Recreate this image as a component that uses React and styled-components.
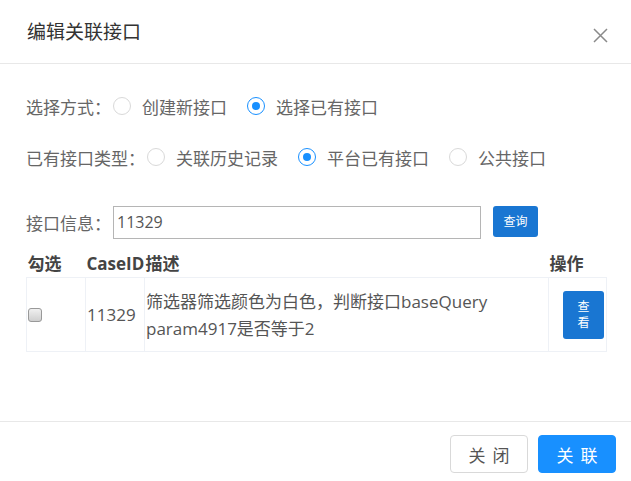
import React, { useState } from "react";
import styled, { createGlobalStyle } from "styled-components";

const GlobalStyle = createGlobalStyle`
  html, body {
    margin: 0;
    padding: 0;
    background: #fff;
  }
  body {
    font-family: "Open Sans", "Noto Sans CJK SC", sans-serif;
  }
  * {
    box-sizing: border-box;
  }
`;

const Dialog = styled.div`
  display: flex;
  flex-direction: column;
  width: 631px;
  height: 481px;
  background: #fff;
`;

const Header = styled.div`
  display: flex;
  align-items: center;
  justify-content: space-between;
  height: 64px;
  padding: 0 23px 0 27px;
  border-bottom: 1px solid #e8e8e8;
`;

const Title = styled.div`
  font-size: 19px;
  color: #333;
  padding-bottom: 2px;
`;

const CloseButton = styled.div`
  display: flex;
  width: 15px;
  height: 15px;
  margin-top: 8px;
  cursor: pointer;
`;

const Body = styled.div`
  flex: 1;
  padding: 25px 25px 0 26px;
`;

const FormRow = styled.div`
  display: flex;
  align-items: center;
  height: 34px;
  margin-top: ${({ $top }) => $top || 0}px;
  font-size: 17px;
  color: #666;
`;

const Label = styled.span`
  white-space: nowrap;
`;

const Option = styled.label`
  display: flex;
  align-items: center;
  margin-left: 20px;
  cursor: pointer;

  &:first-of-type {
    margin-left: 2px;
  }
`;

const Radio = styled.span`
  position: relative;
  width: 18px;
  height: 18px;
  border-radius: 50%;
  border: 1px solid ${({ $checked }) => ($checked ? "#1890ff" : "#d9d9d9")};
  background: #fff;
  margin-right: 11px;

  &::after {
    content: "";
    display: ${({ $checked }) => ($checked ? "block" : "none")};
    position: absolute;
    left: 4px;
    top: 4px;
    width: 8px;
    height: 8px;
    border-radius: 50%;
    background: #1890ff;
  }
`;

const SearchInput = styled.input`
  width: 368px;
  height: 33px;
  margin-left: 2px;
  padding: 0 3px;
  border: 1px solid #b5b5b5;
  font-family: "Open Sans", "Noto Sans CJK SC", sans-serif;
  font-size: 16px;
  color: #555;
  outline: none;
`;

const SmallBlueButton = styled.button`
  width: 45px;
  height: 31px;
  margin-left: 12px;
  margin-top: -2px;
  padding: 0;
  border: none;
  border-radius: 3px;
  background: #1976d2;
  color: #fff;
  font-family: "Open Sans", "Noto Sans CJK SC", sans-serif;
  font-size: 12px;
  cursor: pointer;
`;

const Table = styled.table`
  margin-top: 12px;
  border-collapse: collapse;
  table-layout: fixed;
  width: 580px;
  font-size: 17px;
`;

const Th = styled.th`
  height: 26px;
  padding: 0 1px;
  text-align: left;
  font-weight: 700;
  color: #444;
  white-space: nowrap;
  line-height: 26px;
`;

const Td = styled.td`
  height: 74px;
  padding: 0 1px;
  border: 1px solid #eef1f6;
  vertical-align: middle;
  color: #555;
  line-height: 27px;
`;

const CheckBox = styled.span`
  display: inline-block;
  width: 14px;
  height: 14px;
  margin-top: -3px;
  vertical-align: middle;
  border: 1px solid #999;
  border-radius: 3px;
  background: linear-gradient(#f0f0f0, #cfcfcf);
`;

const ActionCell = styled(Td)`
  padding: 0 0 0 14px;
`;

const ViewButton = styled.button`
  display: block;
  width: 41px;
  height: 48px;
  padding: 0 12px;
  border: none;
  border-radius: 3px;
  background: #1976d2;
  color: #fff;
  font-family: "Open Sans", "Noto Sans CJK SC", sans-serif;
  font-size: 12px;
  line-height: 16px;
  cursor: pointer;
`;

const Footer = styled.div`
  display: flex;
  justify-content: flex-end;
  gap: 10px;
  padding: 13px 15px 8px;
  border-top: 1px solid #e8e8e8;
`;

const FooterButton = styled.button`
  width: 78px;
  height: 38px;
  padding: 0 0 0 7px;
  border-radius: 4px;
  border: 1px solid ${({ $primary }) => ($primary ? "#1890ff" : "#d9d9d9")};
  background: ${({ $primary }) => ($primary ? "#1890ff" : "#fff")};
  color: ${({ $primary }) => ($primary ? "#fff" : "#555")};
  font-family: "Noto Sans CJK SC", sans-serif;
  font-size: 17px;
  letter-spacing: 7px;
  cursor: pointer;
`;

const modes = ["创建新接口", "选择已有接口"];
const types = ["关联历史记录", "平台已有接口", "公共接口"];

const App = () => {
  const [mode, setMode] = useState(1);
  const [type, setType] = useState(1);
  const [keyword, setKeyword] = useState("11329");

  return (
    <Dialog>
      <GlobalStyle />
      <Header>
        <Title>编辑关联接口</Title>
        <CloseButton>
          <svg width="15" height="15" viewBox="0 0 15 15">
            <path d="M1 1L14 14M14 1L1 14" stroke="#8a8a8a" strokeWidth="1.5" fill="none" />
          </svg>
        </CloseButton>
      </Header>

      <Body>
        <FormRow>
          <Label>选择方式：</Label>
          {modes.map((m, i) => (
            <Option key={m} onClick={() => setMode(i)}>
              <Radio $checked={mode === i} />
              {m}
            </Option>
          ))}
        </FormRow>

        <FormRow $top={17}>
          <Label>已有接口类型：</Label>
          {types.map((t, i) => (
            <Option key={t} onClick={() => setType(i)}>
              <Radio $checked={type === i} />
              {t}
            </Option>
          ))}
        </FormRow>

        <FormRow $top={31}>
          <Label>接口信息：</Label>
          <SearchInput value={keyword} onChange={(e) => setKeyword(e.target.value)} />
          <SmallBlueButton>查询</SmallBlueButton>
        </FormRow>

        <Table>
          <colgroup>
            <col style={{ width: 59 }} />
            <col style={{ width: 59 }} />
            <col style={{ width: 404 }} />
            <col style={{ width: 58 }} />
          </colgroup>
          <thead>
            <tr>
              <Th>勾选</Th>
              <Th>CaseID</Th>
              <Th>描述</Th>
              <Th>操作</Th>
            </tr>
          </thead>
          <tbody>
            <tr>
              <Td>
                <CheckBox />
              </Td>
              <Td>11329</Td>
              <Td>
                筛选器筛选颜色为白色，判断接口baseQuery param4917是否等于2
              </Td>
              <ActionCell>
                <ViewButton>查看</ViewButton>
              </ActionCell>
            </tr>
          </tbody>
        </Table>
      </Body>

      <Footer>
        <FooterButton>关闭</FooterButton>
        <FooterButton $primary>关联</FooterButton>
      </Footer>
    </Dialog>
  );
};

export default App;
